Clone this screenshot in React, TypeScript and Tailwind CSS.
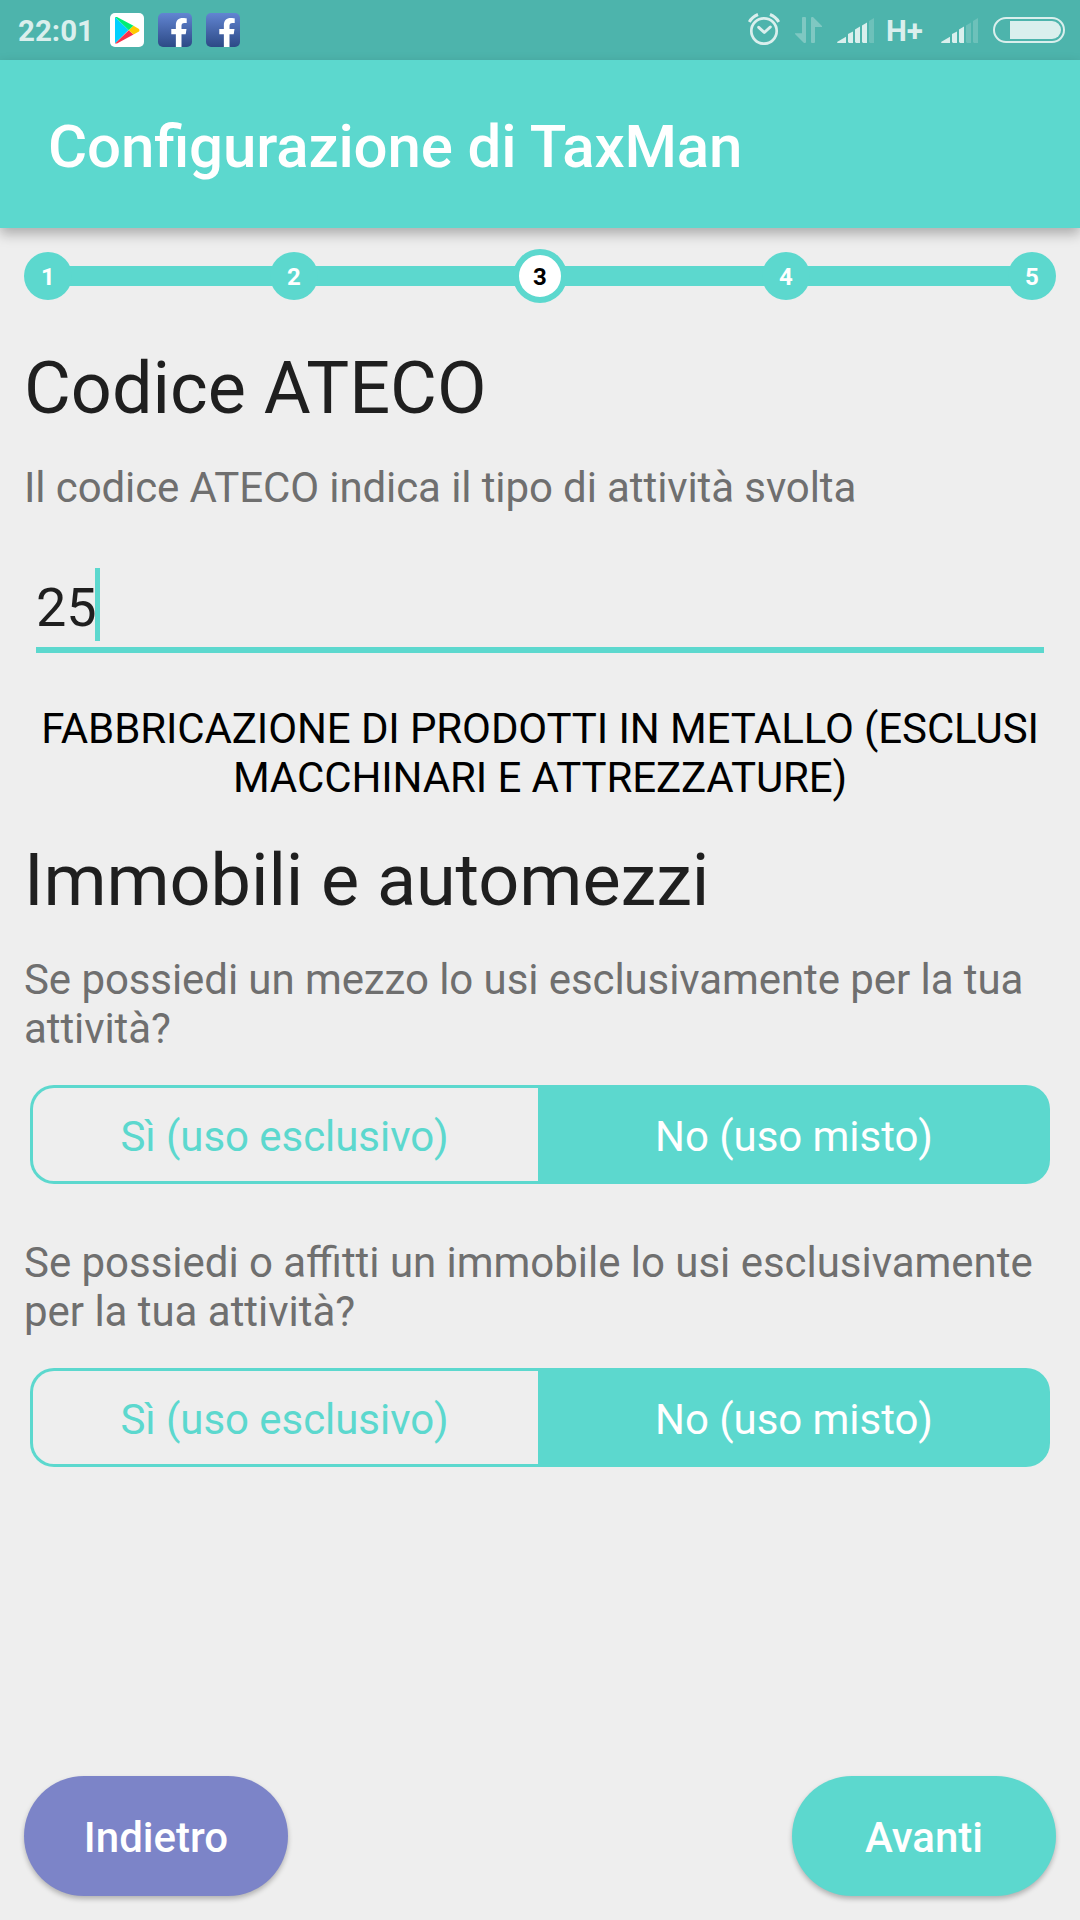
import React from 'react';
import { FaFacebookF } from 'react-icons/fa';

const STEPS = [1, 2, 3, 4, 5];
const CURRENT_STEP = 3;

const QUESTIONS = [
  { id: 1, text: "Se possiedi un mezzo lo usi esclusivamente per la tua attività?", style: "tracking-[-0.08px]", spacing: "mt-8" },
  { id: 2, text: "Se possiedi o affitti un immobile lo usi esclusivamente per la tua attività?", style: "tracking-[-0.03px]", spacing: "mt-[54px]" },
];

function PlayIcon() {
  return (
    <svg viewBox="0 0 34 34" className="w-[34px] h-[34px]">
      <rect width="34" height="34" rx="5" fill="#fff" />
      <path d="M5 4 L18.5 17 L5 30.5 Z" fill="#00d0ff" />
      <path d="M5 4 L7 4 L23.5 12.8 L18.8 17.3 Z" fill="#00ee76" />
      <path d="M5 30.5 L18.8 17.3 L23.5 21.5 L7 30.5 Z" fill="#f7324b" />
      <path d="M23.5 12.8 L29 16 Q30 17.2 29 18.4 L23.5 21.5 L18.8 17.3 Z" fill="#ffc900" />
    </svg>
  );
}

function FacebookIcon() {
  return (
    <div className="w-[34px] h-[34px] rounded-[5px] overflow-hidden bg-linear-to-b from-[#6285d2] to-[#2d4a86] flex items-end justify-end pr-[4px]">
      <FaFacebookF className="w-[18px] h-[29px] text-white" />
    </div>
  );
}

function AlarmIcon() {
  return (
    <svg viewBox="0 0 32 32" className="w-8 h-8" fill="none" stroke="#daefed">
      <circle cx="16" cy="18" r="12.7" strokeWidth="2.7" />
      <path d="M10.7 14.3 L16.3 19.5 L22.3 14" strokeWidth="3" strokeLinecap="round" strokeLinejoin="round" />
      <path d="M1.3 9 Q4 4 10 1.5 M30.7 9 Q28 4 22 1.5" strokeWidth="3" />
    </svg>
  );
}

function DataIcon() {
  return (
    <svg viewBox="0 0 27 26" className="w-[27px] h-[26px]" fill="#7fc8c2">
      <path d="M7 1 Q7 0 8 0 H10 Q11 0 11 1 V25 Q11 26 10 26 H9 L0 17 V16.3 H7 Z" />
      <path d="M16 1 Q16 0 17 0 H18 L27 9 V10 H20 V25 Q20 26 19 26 H17 Q16 26 16 25 Z" />
    </svg>
  );
}

function SignalIcon({ level }: { level: number }) {
  const bars = [
    "M0 24 L9 18.7 V25 H0.5 Z",
    "M11 16 L16 13.5 V25 H12 L11 24 Z",
    "M18 11.5 L23 8.5 V25 H19 L18 24 Z",
    "M25 7.5 L30 4.5 V25 H26 L25 24 Z",
    "M32 3 L37 0 V25 H33 L32 24 Z",
  ];
  return (
    <svg viewBox="0 0 37 25" className="w-[37px] h-[25px]">
      {bars.map((d, i) => (
        <path key={d} d={d} fill={i < level ? "#daefed" : "#6dc1ba"} />
      ))}
    </svg>
  );
}

function BatteryIcon() {
  return (
    <svg viewBox="0 0 72 26" className="w-[72px] h-[26px]">
      <rect x="1" y="1" width="70" height="24" rx="12" fill="none" stroke="#daefed" strokeWidth="2" />
      <path d="M17 4 H59 A9 9 0 0 1 59 22 H17 Z" fill="#daefed" />
    </svg>
  );
}

function StatusBar() {
  return (
    <div className="h-[60px] bg-[#4db4ac] text-[#daefed] flex items-center justify-between pl-[18px] pr-[15px]">
      <div className="flex items-center">
        <span className="w-[92px] text-[29.5px] leading-[35px] font-bold pt-[3px]">22:01</span>
        <div className="flex gap-[14px]">
          <PlayIcon />
          <FacebookIcon />
          <FacebookIcon />
        </div>
      </div>
      <div className="flex items-center">
        <div className="mr-[15px] -mt-[2px]"><AlarmIcon /></div>
        <div className="mr-[15px]"><DataIcon /></div>
        <div className="mr-[12px] mt-px"><SignalIcon level={4} /></div>
        <span className="w-[55px] text-[29.5px] leading-[35px] font-bold pt-[3px]">H+</span>
        <div className="mr-[15px] mt-px"><SignalIcon level={3} /></div>
        <BatteryIcon />
      </div>
    </div>
  );
}

function Stepper() {
  return (
    <div className="h-[54px] flex items-center">
      {STEPS.map(step => (
        <React.Fragment key={step}>
          {step > 1 && <div className="flex-1 h-5 -mx-[6px] bg-[#5cd8ce]"></div>}
          {step === CURRENT_STEP ? (
            <div className="relative w-[54px] h-[54px] -mx-[3px] rounded-full border-6 border-[#5cd8ce] bg-white text-black text-2xl font-bold flex items-center justify-center pt-px">
              {step}
            </div>
          ) : (
            <div className="relative w-12 h-12 rounded-full bg-[#5cd8ce] text-white text-2xl font-bold flex items-center justify-center pt-px">
              {step}
            </div>
          )}
        </React.Fragment>
      ))}
    </div>
  );
}

function Toggle() {
  return (
    <div className="mt-8 mx-[6px] h-[99px] flex text-[42px] leading-[49px] tracking-[-0.05px]">
      <button className="w-[508px] pt-[3px] pr-[2px] rounded-l-3xl border-3 border-r-0 border-[#5cd8ce] text-[#5cd8ce]">Sì (uso esclusivo)</button>
      <button className="flex-1 pt-[3px] rounded-r-3xl bg-[#5cd8ce] text-white">No (uso misto)</button>
    </div>
  );
}

export default function App() {
  return (
    <div className="w-[1080px] h-[1920px] bg-[#eeeeee] font-[Roboto,sans-serif] [font-feature-settings:'liga'_1] flex flex-col overflow-hidden">
      <StatusBar />
      <header className="h-[168px] shrink-0 bg-[#5cd8ce] shadow-[0_6px_12px_rgba(0,0,0,0.28)] flex items-center px-12">
        <h1 className="text-[60px] leading-[70px] font-medium tracking-[-0.14px] text-white pt-[5px]">Configurazione di TaxMan</h1>
      </header>

      <main className="flex-1 px-6 pt-[21px]">
        <Stepper />

        <h2 className="mt-11 text-[72px] leading-[84px] text-[#1f1f1f]">Codice ATECO</h2>
        <p className="mt-8 text-[42px] leading-[49px] tracking-[-0.1px] text-[#6f6f6f]">Il codice ATECO indica il tipo di attività svolta</p>

        <div className="mt-14 mx-3 h-[85px] border-b-6 border-[#5cd8ce] flex items-start">
          <span className="pt-2 text-[54px] leading-[63px] text-[#1f1f1f]">25</span>
          <span className="w-[5px] h-[73px] -ml-[2px] bg-[#5cd8ce]"></span>
        </div>

        <p className="mt-[51px] text-[42px] leading-[49px] tracking-[-0.11px] text-black text-center">
          FABBRICAZIONE DI PRODOTTI IN METALLO (ESCLUSI MACCHINARI E ATTREZZATURE)
        </p>

        <h2 className="mt-[37px] text-[72px] leading-[84px] tracking-[-0.08px] text-[#1f1f1f]">Immobili e automezzi</h2>
        {QUESTIONS.map(q => (
          <div key={q.id} className={q.spacing}>
            <p className={`text-[42px] leading-[49px] text-[#6f6f6f] ${q.style}`}>{q.text}</p>
            <Toggle />
          </div>
        ))}
      </main>

      <footer className="flex justify-between px-6 pb-6 text-[42px] leading-[49px] font-medium text-white">
        <button className="w-[264px] h-[120px] rounded-full bg-[#7c84c8] shadow-[0_3px_5px_rgba(0,0,0,0.25)] pt-[3px]">Indietro</button>
        <button className="w-[264px] h-[120px] rounded-full bg-[#5cd8ce] shadow-[0_3px_5px_rgba(0,0,0,0.25)] pt-[3px]">Avanti</button>
      </footer>
    </div>
  );
}
